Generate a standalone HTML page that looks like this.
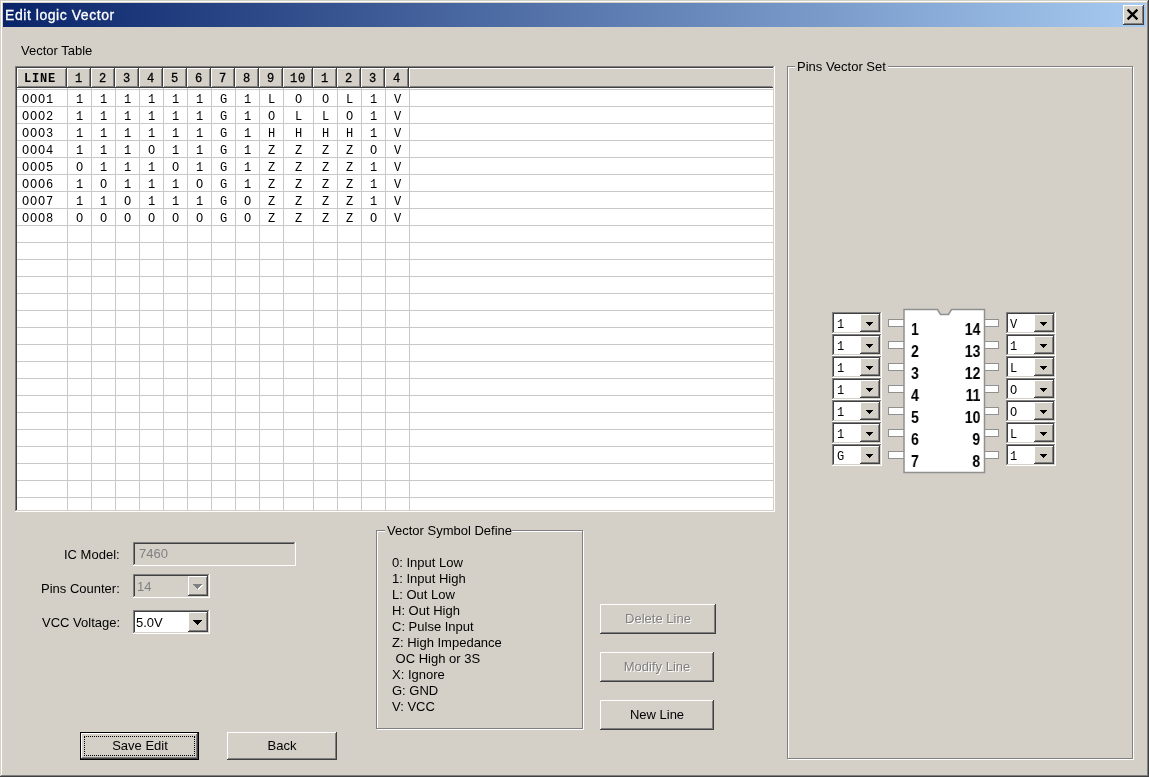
<!DOCTYPE html>
<html><head><meta charset="utf-8"><style>
html,body{margin:0;padding:0}
body{width:1149px;height:777px;background:#D4D0C8;position:relative;overflow:hidden}
body div,body svg{position:absolute}
.s,.md,.hd,.mc,.cn,.title{will-change:transform}
.s{font-family:"Liberation Sans",sans-serif;font-size:13px;line-height:20px;white-space:pre;color:#000}
.title{font-family:"Liberation Sans",sans-serif;font-size:14px;letter-spacing:0.55px;-webkit-text-stroke:0.3px #fff;line-height:20px;white-space:pre;color:#fff}
.hd{font-family:"Liberation Mono",monospace;font-weight:bold;font-size:12px;letter-spacing:0.8px;line-height:20px;white-space:pre;color:#000}
.md{font-family:"Liberation Mono",monospace;font-size:12px;letter-spacing:0.8px;line-height:20px;white-space:pre;color:#000}
.mc{font-family:"Liberation Mono",monospace;font-size:12px;line-height:20px;white-space:pre;color:#000}
.cn{font-family:"Liberation Sans",sans-serif;font-weight:bold;font-size:16.5px;transform:scaleX(0.85);line-height:20px;white-space:pre;color:#000}
</style></head><body>
<div style="left:1px;top:1px;width:1147px;height:1px;background:#FFFFFF"></div>
<div style="left:1px;top:1px;width:1px;height:775px;background:#FFFFFF"></div>
<div style="left:1px;top:775px;width:1147px;height:1px;background:#808080"></div>
<div style="left:1147px;top:1px;width:1px;height:775px;background:#808080"></div>
<div style="left:0px;top:776px;width:1149px;height:1px;background:#404040"></div>
<div style="left:1148px;top:0px;width:1px;height:777px;background:#404040"></div>
<div style="left:3px;top:3px;width:1143px;height:24px;background:linear-gradient(to right,#0A246A,#A6CAF0)"></div>
<div class="title" style="left:5px;top:5px;">Edit logic Vector</div>
<div style="left:1123px;top:5px;width:21px;height:20px;background:#D4D0C8"></div>
<div style="left:1123px;top:5px;width:21px;height:1px;background:#FFFFFF"></div>
<div style="left:1123px;top:5px;width:1px;height:20px;background:#FFFFFF"></div>
<div style="left:1123px;top:24px;width:21px;height:1px;background:#404040"></div>
<div style="left:1143px;top:5px;width:1px;height:20px;background:#404040"></div>
<div style="left:1124px;top:23px;width:19px;height:1px;background:#808080"></div>
<div style="left:1142px;top:6px;width:1px;height:18px;background:#808080"></div>
<svg style="position:absolute;left:1118px;top:0px" width="30" height="30" viewBox="0 0 30 30"><path d="M9.6 9.6L19.4 19.4M19.4 9.6L9.6 19.4" stroke="#000" stroke-width="2.3" stroke-linecap="butt" fill="none"/></svg>
<div class="s" style="left:21px;top:41px;">Vector Table</div>
<div style="left:15px;top:66px;width:760px;height:1px;background:#808080"></div>
<div style="left:15px;top:66px;width:1px;height:446px;background:#808080"></div>
<div style="left:15px;top:511px;width:760px;height:1px;background:#FFFFFF"></div>
<div style="left:774px;top:66px;width:1px;height:446px;background:#FFFFFF"></div>
<div style="left:16px;top:67px;width:758px;height:1px;background:#404040"></div>
<div style="left:16px;top:67px;width:1px;height:444px;background:#404040"></div>
<div style="left:16px;top:510px;width:758px;height:1px;background:#D4D0C8"></div>
<div style="left:773px;top:67px;width:1px;height:444px;background:#D4D0C8"></div>
<div style="left:17px;top:68px;width:756px;height:442px;background:#FFFFFF"></div>
<div style="left:17px;top:68px;width:50px;height:20px;background:#D4D0C8"></div>
<div style="left:17px;top:68px;width:50px;height:1px;background:#FFFFFF"></div>
<div style="left:17px;top:68px;width:1px;height:20px;background:#FFFFFF"></div>
<div style="left:65px;top:69px;width:1px;height:18px;background:#808080"></div>
<div style="left:66px;top:68px;width:1px;height:20px;background:#404040"></div>
<div style="left:18px;top:86px;width:48px;height:1px;background:#808080"></div>
<div style="left:17px;top:87px;width:50px;height:1px;background:#404040"></div>
<div style="left:67px;top:68px;width:24px;height:20px;background:#D4D0C8"></div>
<div style="left:67px;top:68px;width:24px;height:1px;background:#FFFFFF"></div>
<div style="left:67px;top:68px;width:1px;height:20px;background:#FFFFFF"></div>
<div style="left:89px;top:69px;width:1px;height:18px;background:#808080"></div>
<div style="left:90px;top:68px;width:1px;height:20px;background:#404040"></div>
<div style="left:68px;top:86px;width:22px;height:1px;background:#808080"></div>
<div style="left:67px;top:87px;width:24px;height:1px;background:#404040"></div>
<div style="left:91px;top:68px;width:24px;height:20px;background:#D4D0C8"></div>
<div style="left:91px;top:68px;width:24px;height:1px;background:#FFFFFF"></div>
<div style="left:91px;top:68px;width:1px;height:20px;background:#FFFFFF"></div>
<div style="left:113px;top:69px;width:1px;height:18px;background:#808080"></div>
<div style="left:114px;top:68px;width:1px;height:20px;background:#404040"></div>
<div style="left:92px;top:86px;width:22px;height:1px;background:#808080"></div>
<div style="left:91px;top:87px;width:24px;height:1px;background:#404040"></div>
<div style="left:115px;top:68px;width:24px;height:20px;background:#D4D0C8"></div>
<div style="left:115px;top:68px;width:24px;height:1px;background:#FFFFFF"></div>
<div style="left:115px;top:68px;width:1px;height:20px;background:#FFFFFF"></div>
<div style="left:137px;top:69px;width:1px;height:18px;background:#808080"></div>
<div style="left:138px;top:68px;width:1px;height:20px;background:#404040"></div>
<div style="left:116px;top:86px;width:22px;height:1px;background:#808080"></div>
<div style="left:115px;top:87px;width:24px;height:1px;background:#404040"></div>
<div style="left:139px;top:68px;width:24px;height:20px;background:#D4D0C8"></div>
<div style="left:139px;top:68px;width:24px;height:1px;background:#FFFFFF"></div>
<div style="left:139px;top:68px;width:1px;height:20px;background:#FFFFFF"></div>
<div style="left:161px;top:69px;width:1px;height:18px;background:#808080"></div>
<div style="left:162px;top:68px;width:1px;height:20px;background:#404040"></div>
<div style="left:140px;top:86px;width:22px;height:1px;background:#808080"></div>
<div style="left:139px;top:87px;width:24px;height:1px;background:#404040"></div>
<div style="left:163px;top:68px;width:24px;height:20px;background:#D4D0C8"></div>
<div style="left:163px;top:68px;width:24px;height:1px;background:#FFFFFF"></div>
<div style="left:163px;top:68px;width:1px;height:20px;background:#FFFFFF"></div>
<div style="left:185px;top:69px;width:1px;height:18px;background:#808080"></div>
<div style="left:186px;top:68px;width:1px;height:20px;background:#404040"></div>
<div style="left:164px;top:86px;width:22px;height:1px;background:#808080"></div>
<div style="left:163px;top:87px;width:24px;height:1px;background:#404040"></div>
<div style="left:187px;top:68px;width:24px;height:20px;background:#D4D0C8"></div>
<div style="left:187px;top:68px;width:24px;height:1px;background:#FFFFFF"></div>
<div style="left:187px;top:68px;width:1px;height:20px;background:#FFFFFF"></div>
<div style="left:209px;top:69px;width:1px;height:18px;background:#808080"></div>
<div style="left:210px;top:68px;width:1px;height:20px;background:#404040"></div>
<div style="left:188px;top:86px;width:22px;height:1px;background:#808080"></div>
<div style="left:187px;top:87px;width:24px;height:1px;background:#404040"></div>
<div style="left:211px;top:68px;width:24px;height:20px;background:#D4D0C8"></div>
<div style="left:211px;top:68px;width:24px;height:1px;background:#FFFFFF"></div>
<div style="left:211px;top:68px;width:1px;height:20px;background:#FFFFFF"></div>
<div style="left:233px;top:69px;width:1px;height:18px;background:#808080"></div>
<div style="left:234px;top:68px;width:1px;height:20px;background:#404040"></div>
<div style="left:212px;top:86px;width:22px;height:1px;background:#808080"></div>
<div style="left:211px;top:87px;width:24px;height:1px;background:#404040"></div>
<div style="left:235px;top:68px;width:24px;height:20px;background:#D4D0C8"></div>
<div style="left:235px;top:68px;width:24px;height:1px;background:#FFFFFF"></div>
<div style="left:235px;top:68px;width:1px;height:20px;background:#FFFFFF"></div>
<div style="left:257px;top:69px;width:1px;height:18px;background:#808080"></div>
<div style="left:258px;top:68px;width:1px;height:20px;background:#404040"></div>
<div style="left:236px;top:86px;width:22px;height:1px;background:#808080"></div>
<div style="left:235px;top:87px;width:24px;height:1px;background:#404040"></div>
<div style="left:259px;top:68px;width:24px;height:20px;background:#D4D0C8"></div>
<div style="left:259px;top:68px;width:24px;height:1px;background:#FFFFFF"></div>
<div style="left:259px;top:68px;width:1px;height:20px;background:#FFFFFF"></div>
<div style="left:281px;top:69px;width:1px;height:18px;background:#808080"></div>
<div style="left:282px;top:68px;width:1px;height:20px;background:#404040"></div>
<div style="left:260px;top:86px;width:22px;height:1px;background:#808080"></div>
<div style="left:259px;top:87px;width:24px;height:1px;background:#404040"></div>
<div style="left:283px;top:68px;width:30px;height:20px;background:#D4D0C8"></div>
<div style="left:283px;top:68px;width:30px;height:1px;background:#FFFFFF"></div>
<div style="left:283px;top:68px;width:1px;height:20px;background:#FFFFFF"></div>
<div style="left:311px;top:69px;width:1px;height:18px;background:#808080"></div>
<div style="left:312px;top:68px;width:1px;height:20px;background:#404040"></div>
<div style="left:284px;top:86px;width:28px;height:1px;background:#808080"></div>
<div style="left:283px;top:87px;width:30px;height:1px;background:#404040"></div>
<div style="left:313px;top:68px;width:24px;height:20px;background:#D4D0C8"></div>
<div style="left:313px;top:68px;width:24px;height:1px;background:#FFFFFF"></div>
<div style="left:313px;top:68px;width:1px;height:20px;background:#FFFFFF"></div>
<div style="left:335px;top:69px;width:1px;height:18px;background:#808080"></div>
<div style="left:336px;top:68px;width:1px;height:20px;background:#404040"></div>
<div style="left:314px;top:86px;width:22px;height:1px;background:#808080"></div>
<div style="left:313px;top:87px;width:24px;height:1px;background:#404040"></div>
<div style="left:337px;top:68px;width:24px;height:20px;background:#D4D0C8"></div>
<div style="left:337px;top:68px;width:24px;height:1px;background:#FFFFFF"></div>
<div style="left:337px;top:68px;width:1px;height:20px;background:#FFFFFF"></div>
<div style="left:359px;top:69px;width:1px;height:18px;background:#808080"></div>
<div style="left:360px;top:68px;width:1px;height:20px;background:#404040"></div>
<div style="left:338px;top:86px;width:22px;height:1px;background:#808080"></div>
<div style="left:337px;top:87px;width:24px;height:1px;background:#404040"></div>
<div style="left:361px;top:68px;width:24px;height:20px;background:#D4D0C8"></div>
<div style="left:361px;top:68px;width:24px;height:1px;background:#FFFFFF"></div>
<div style="left:361px;top:68px;width:1px;height:20px;background:#FFFFFF"></div>
<div style="left:383px;top:69px;width:1px;height:18px;background:#808080"></div>
<div style="left:384px;top:68px;width:1px;height:20px;background:#404040"></div>
<div style="left:362px;top:86px;width:22px;height:1px;background:#808080"></div>
<div style="left:361px;top:87px;width:24px;height:1px;background:#404040"></div>
<div style="left:385px;top:68px;width:24px;height:20px;background:#D4D0C8"></div>
<div style="left:385px;top:68px;width:24px;height:1px;background:#FFFFFF"></div>
<div style="left:385px;top:68px;width:1px;height:20px;background:#FFFFFF"></div>
<div style="left:407px;top:69px;width:1px;height:18px;background:#808080"></div>
<div style="left:408px;top:68px;width:1px;height:20px;background:#404040"></div>
<div style="left:386px;top:86px;width:22px;height:1px;background:#808080"></div>
<div style="left:385px;top:87px;width:24px;height:1px;background:#404040"></div>
<div style="left:409px;top:68px;width:364px;height:20px;background:#D4D0C8"></div>
<div style="left:409px;top:68px;width:364px;height:1px;background:#FFFFFF"></div>
<div style="left:409px;top:68px;width:1px;height:20px;background:#FFFFFF"></div>
<div style="left:410px;top:86px;width:362px;height:1px;background:#808080"></div>
<div style="left:409px;top:87px;width:364px;height:1px;background:#404040"></div>
<div style="left:17px;top:89px;width:756px;height:1px;background:#C8C8C8"></div>
<div style="left:17px;top:106px;width:756px;height:1px;background:#C8C8C8"></div>
<div style="left:17px;top:123px;width:756px;height:1px;background:#C8C8C8"></div>
<div style="left:17px;top:140px;width:756px;height:1px;background:#C8C8C8"></div>
<div style="left:17px;top:157px;width:756px;height:1px;background:#C8C8C8"></div>
<div style="left:17px;top:174px;width:756px;height:1px;background:#C8C8C8"></div>
<div style="left:17px;top:191px;width:756px;height:1px;background:#C8C8C8"></div>
<div style="left:17px;top:208px;width:756px;height:1px;background:#C8C8C8"></div>
<div style="left:17px;top:225px;width:756px;height:1px;background:#C8C8C8"></div>
<div style="left:17px;top:242px;width:756px;height:1px;background:#C8C8C8"></div>
<div style="left:17px;top:259px;width:756px;height:1px;background:#C8C8C8"></div>
<div style="left:17px;top:276px;width:756px;height:1px;background:#C8C8C8"></div>
<div style="left:17px;top:293px;width:756px;height:1px;background:#C8C8C8"></div>
<div style="left:17px;top:310px;width:756px;height:1px;background:#C8C8C8"></div>
<div style="left:17px;top:327px;width:756px;height:1px;background:#C8C8C8"></div>
<div style="left:17px;top:344px;width:756px;height:1px;background:#C8C8C8"></div>
<div style="left:17px;top:361px;width:756px;height:1px;background:#C8C8C8"></div>
<div style="left:17px;top:378px;width:756px;height:1px;background:#C8C8C8"></div>
<div style="left:17px;top:395px;width:756px;height:1px;background:#C8C8C8"></div>
<div style="left:17px;top:412px;width:756px;height:1px;background:#C8C8C8"></div>
<div style="left:17px;top:429px;width:756px;height:1px;background:#C8C8C8"></div>
<div style="left:17px;top:446px;width:756px;height:1px;background:#C8C8C8"></div>
<div style="left:17px;top:463px;width:756px;height:1px;background:#C8C8C8"></div>
<div style="left:17px;top:480px;width:756px;height:1px;background:#C8C8C8"></div>
<div style="left:17px;top:497px;width:756px;height:1px;background:#C8C8C8"></div>
<div style="left:67px;top:88px;width:1px;height:422px;background:#C8C8C8"></div>
<div style="left:91px;top:88px;width:1px;height:422px;background:#C8C8C8"></div>
<div style="left:115px;top:88px;width:1px;height:422px;background:#C8C8C8"></div>
<div style="left:139px;top:88px;width:1px;height:422px;background:#C8C8C8"></div>
<div style="left:163px;top:88px;width:1px;height:422px;background:#C8C8C8"></div>
<div style="left:187px;top:88px;width:1px;height:422px;background:#C8C8C8"></div>
<div style="left:211px;top:88px;width:1px;height:422px;background:#C8C8C8"></div>
<div style="left:235px;top:88px;width:1px;height:422px;background:#C8C8C8"></div>
<div style="left:259px;top:88px;width:1px;height:422px;background:#C8C8C8"></div>
<div style="left:283px;top:88px;width:1px;height:422px;background:#C8C8C8"></div>
<div style="left:313px;top:88px;width:1px;height:422px;background:#C8C8C8"></div>
<div style="left:337px;top:88px;width:1px;height:422px;background:#C8C8C8"></div>
<div style="left:361px;top:88px;width:1px;height:422px;background:#C8C8C8"></div>
<div style="left:385px;top:88px;width:1px;height:422px;background:#C8C8C8"></div>
<div style="left:409px;top:88px;width:1px;height:422px;background:#C8C8C8"></div>
<div class="hd" style="left:24px;top:69px;">LINE</div>
<div class="md" style="left:59.400000000000006px;width:40px;top:69px;text-align:center;-webkit-text-stroke:0.3px #000">1</div>
<div class="md" style="left:83.4px;width:40px;top:69px;text-align:center;-webkit-text-stroke:0.3px #000">2</div>
<div class="md" style="left:107.4px;width:40px;top:69px;text-align:center;-webkit-text-stroke:0.3px #000">3</div>
<div class="md" style="left:131.4px;width:40px;top:69px;text-align:center;-webkit-text-stroke:0.3px #000">4</div>
<div class="md" style="left:155.4px;width:40px;top:69px;text-align:center;-webkit-text-stroke:0.3px #000">5</div>
<div class="md" style="left:179.4px;width:40px;top:69px;text-align:center;-webkit-text-stroke:0.3px #000">6</div>
<div class="md" style="left:203.4px;width:40px;top:69px;text-align:center;-webkit-text-stroke:0.3px #000">7</div>
<div class="md" style="left:227.4px;width:40px;top:69px;text-align:center;-webkit-text-stroke:0.3px #000">8</div>
<div class="md" style="left:251.39999999999998px;width:40px;top:69px;text-align:center;-webkit-text-stroke:0.3px #000">9</div>
<div class="md" style="left:278.4px;width:40px;top:69px;text-align:center;-webkit-text-stroke:0.3px #000">10</div>
<div class="md" style="left:305.4px;width:40px;top:69px;text-align:center;-webkit-text-stroke:0.3px #000">1</div>
<div class="md" style="left:329.4px;width:40px;top:69px;text-align:center;-webkit-text-stroke:0.3px #000">2</div>
<div class="md" style="left:353.4px;width:40px;top:69px;text-align:center;-webkit-text-stroke:0.3px #000">3</div>
<div class="md" style="left:377.4px;width:40px;top:69px;text-align:center;-webkit-text-stroke:0.3px #000">4</div>
<div class="md" style="left:22px;top:90px;">OOO1</div>
<div class="md" style="left:64.5px;width:30px;top:90px;text-align:center;">1</div>
<div class="md" style="left:88.5px;width:30px;top:90px;text-align:center;">1</div>
<div class="md" style="left:112.5px;width:30px;top:90px;text-align:center;">1</div>
<div class="md" style="left:136.5px;width:30px;top:90px;text-align:center;">1</div>
<div class="md" style="left:160.5px;width:30px;top:90px;text-align:center;">1</div>
<div class="md" style="left:184.5px;width:30px;top:90px;text-align:center;">1</div>
<div class="md" style="left:208.5px;width:30px;top:90px;text-align:center;">G</div>
<div class="md" style="left:232.5px;width:30px;top:90px;text-align:center;">1</div>
<div class="md" style="left:256.5px;width:30px;top:90px;text-align:center;">L</div>
<div class="md" style="left:283.5px;width:30px;top:90px;text-align:center;">O</div>
<div class="md" style="left:310.5px;width:30px;top:90px;text-align:center;">O</div>
<div class="md" style="left:334.5px;width:30px;top:90px;text-align:center;">L</div>
<div class="md" style="left:358.5px;width:30px;top:90px;text-align:center;">1</div>
<div class="md" style="left:382.5px;width:30px;top:90px;text-align:center;">V</div>
<div class="md" style="left:22px;top:107px;">OOO2</div>
<div class="md" style="left:64.5px;width:30px;top:107px;text-align:center;">1</div>
<div class="md" style="left:88.5px;width:30px;top:107px;text-align:center;">1</div>
<div class="md" style="left:112.5px;width:30px;top:107px;text-align:center;">1</div>
<div class="md" style="left:136.5px;width:30px;top:107px;text-align:center;">1</div>
<div class="md" style="left:160.5px;width:30px;top:107px;text-align:center;">1</div>
<div class="md" style="left:184.5px;width:30px;top:107px;text-align:center;">1</div>
<div class="md" style="left:208.5px;width:30px;top:107px;text-align:center;">G</div>
<div class="md" style="left:232.5px;width:30px;top:107px;text-align:center;">1</div>
<div class="md" style="left:256.5px;width:30px;top:107px;text-align:center;">O</div>
<div class="md" style="left:283.5px;width:30px;top:107px;text-align:center;">L</div>
<div class="md" style="left:310.5px;width:30px;top:107px;text-align:center;">L</div>
<div class="md" style="left:334.5px;width:30px;top:107px;text-align:center;">O</div>
<div class="md" style="left:358.5px;width:30px;top:107px;text-align:center;">1</div>
<div class="md" style="left:382.5px;width:30px;top:107px;text-align:center;">V</div>
<div class="md" style="left:22px;top:124px;">OOO3</div>
<div class="md" style="left:64.5px;width:30px;top:124px;text-align:center;">1</div>
<div class="md" style="left:88.5px;width:30px;top:124px;text-align:center;">1</div>
<div class="md" style="left:112.5px;width:30px;top:124px;text-align:center;">1</div>
<div class="md" style="left:136.5px;width:30px;top:124px;text-align:center;">1</div>
<div class="md" style="left:160.5px;width:30px;top:124px;text-align:center;">1</div>
<div class="md" style="left:184.5px;width:30px;top:124px;text-align:center;">1</div>
<div class="md" style="left:208.5px;width:30px;top:124px;text-align:center;">G</div>
<div class="md" style="left:232.5px;width:30px;top:124px;text-align:center;">1</div>
<div class="md" style="left:256.5px;width:30px;top:124px;text-align:center;">H</div>
<div class="md" style="left:283.5px;width:30px;top:124px;text-align:center;">H</div>
<div class="md" style="left:310.5px;width:30px;top:124px;text-align:center;">H</div>
<div class="md" style="left:334.5px;width:30px;top:124px;text-align:center;">H</div>
<div class="md" style="left:358.5px;width:30px;top:124px;text-align:center;">1</div>
<div class="md" style="left:382.5px;width:30px;top:124px;text-align:center;">V</div>
<div class="md" style="left:22px;top:141px;">OOO4</div>
<div class="md" style="left:64.5px;width:30px;top:141px;text-align:center;">1</div>
<div class="md" style="left:88.5px;width:30px;top:141px;text-align:center;">1</div>
<div class="md" style="left:112.5px;width:30px;top:141px;text-align:center;">1</div>
<div class="md" style="left:136.5px;width:30px;top:141px;text-align:center;">O</div>
<div class="md" style="left:160.5px;width:30px;top:141px;text-align:center;">1</div>
<div class="md" style="left:184.5px;width:30px;top:141px;text-align:center;">1</div>
<div class="md" style="left:208.5px;width:30px;top:141px;text-align:center;">G</div>
<div class="md" style="left:232.5px;width:30px;top:141px;text-align:center;">1</div>
<div class="md" style="left:256.5px;width:30px;top:141px;text-align:center;">Z</div>
<div class="md" style="left:283.5px;width:30px;top:141px;text-align:center;">Z</div>
<div class="md" style="left:310.5px;width:30px;top:141px;text-align:center;">Z</div>
<div class="md" style="left:334.5px;width:30px;top:141px;text-align:center;">Z</div>
<div class="md" style="left:358.5px;width:30px;top:141px;text-align:center;">O</div>
<div class="md" style="left:382.5px;width:30px;top:141px;text-align:center;">V</div>
<div class="md" style="left:22px;top:158px;">OOO5</div>
<div class="md" style="left:64.5px;width:30px;top:158px;text-align:center;">O</div>
<div class="md" style="left:88.5px;width:30px;top:158px;text-align:center;">1</div>
<div class="md" style="left:112.5px;width:30px;top:158px;text-align:center;">1</div>
<div class="md" style="left:136.5px;width:30px;top:158px;text-align:center;">1</div>
<div class="md" style="left:160.5px;width:30px;top:158px;text-align:center;">O</div>
<div class="md" style="left:184.5px;width:30px;top:158px;text-align:center;">1</div>
<div class="md" style="left:208.5px;width:30px;top:158px;text-align:center;">G</div>
<div class="md" style="left:232.5px;width:30px;top:158px;text-align:center;">1</div>
<div class="md" style="left:256.5px;width:30px;top:158px;text-align:center;">Z</div>
<div class="md" style="left:283.5px;width:30px;top:158px;text-align:center;">Z</div>
<div class="md" style="left:310.5px;width:30px;top:158px;text-align:center;">Z</div>
<div class="md" style="left:334.5px;width:30px;top:158px;text-align:center;">Z</div>
<div class="md" style="left:358.5px;width:30px;top:158px;text-align:center;">1</div>
<div class="md" style="left:382.5px;width:30px;top:158px;text-align:center;">V</div>
<div class="md" style="left:22px;top:175px;">OOO6</div>
<div class="md" style="left:64.5px;width:30px;top:175px;text-align:center;">1</div>
<div class="md" style="left:88.5px;width:30px;top:175px;text-align:center;">O</div>
<div class="md" style="left:112.5px;width:30px;top:175px;text-align:center;">1</div>
<div class="md" style="left:136.5px;width:30px;top:175px;text-align:center;">1</div>
<div class="md" style="left:160.5px;width:30px;top:175px;text-align:center;">1</div>
<div class="md" style="left:184.5px;width:30px;top:175px;text-align:center;">O</div>
<div class="md" style="left:208.5px;width:30px;top:175px;text-align:center;">G</div>
<div class="md" style="left:232.5px;width:30px;top:175px;text-align:center;">1</div>
<div class="md" style="left:256.5px;width:30px;top:175px;text-align:center;">Z</div>
<div class="md" style="left:283.5px;width:30px;top:175px;text-align:center;">Z</div>
<div class="md" style="left:310.5px;width:30px;top:175px;text-align:center;">Z</div>
<div class="md" style="left:334.5px;width:30px;top:175px;text-align:center;">Z</div>
<div class="md" style="left:358.5px;width:30px;top:175px;text-align:center;">1</div>
<div class="md" style="left:382.5px;width:30px;top:175px;text-align:center;">V</div>
<div class="md" style="left:22px;top:192px;">OOO7</div>
<div class="md" style="left:64.5px;width:30px;top:192px;text-align:center;">1</div>
<div class="md" style="left:88.5px;width:30px;top:192px;text-align:center;">1</div>
<div class="md" style="left:112.5px;width:30px;top:192px;text-align:center;">O</div>
<div class="md" style="left:136.5px;width:30px;top:192px;text-align:center;">1</div>
<div class="md" style="left:160.5px;width:30px;top:192px;text-align:center;">1</div>
<div class="md" style="left:184.5px;width:30px;top:192px;text-align:center;">1</div>
<div class="md" style="left:208.5px;width:30px;top:192px;text-align:center;">G</div>
<div class="md" style="left:232.5px;width:30px;top:192px;text-align:center;">O</div>
<div class="md" style="left:256.5px;width:30px;top:192px;text-align:center;">Z</div>
<div class="md" style="left:283.5px;width:30px;top:192px;text-align:center;">Z</div>
<div class="md" style="left:310.5px;width:30px;top:192px;text-align:center;">Z</div>
<div class="md" style="left:334.5px;width:30px;top:192px;text-align:center;">Z</div>
<div class="md" style="left:358.5px;width:30px;top:192px;text-align:center;">1</div>
<div class="md" style="left:382.5px;width:30px;top:192px;text-align:center;">V</div>
<div class="md" style="left:22px;top:209px;">OOO8</div>
<div class="md" style="left:64.5px;width:30px;top:209px;text-align:center;">O</div>
<div class="md" style="left:88.5px;width:30px;top:209px;text-align:center;">O</div>
<div class="md" style="left:112.5px;width:30px;top:209px;text-align:center;">O</div>
<div class="md" style="left:136.5px;width:30px;top:209px;text-align:center;">O</div>
<div class="md" style="left:160.5px;width:30px;top:209px;text-align:center;">O</div>
<div class="md" style="left:184.5px;width:30px;top:209px;text-align:center;">O</div>
<div class="md" style="left:208.5px;width:30px;top:209px;text-align:center;">G</div>
<div class="md" style="left:232.5px;width:30px;top:209px;text-align:center;">O</div>
<div class="md" style="left:256.5px;width:30px;top:209px;text-align:center;">Z</div>
<div class="md" style="left:283.5px;width:30px;top:209px;text-align:center;">Z</div>
<div class="md" style="left:310.5px;width:30px;top:209px;text-align:center;">Z</div>
<div class="md" style="left:334.5px;width:30px;top:209px;text-align:center;">Z</div>
<div class="md" style="left:358.5px;width:30px;top:209px;text-align:center;">O</div>
<div class="md" style="left:382.5px;width:30px;top:209px;text-align:center;">V</div>
<div class="s" style="right:1029px;top:545px;text-align:right;">IC Model:</div>
<div class="s" style="right:1029px;top:579px;text-align:right;">Pins Counter:</div>
<div class="s" style="right:1029px;top:613px;text-align:right;">VCC Voltage:</div>
<div style="left:133px;top:542px;width:163px;height:1px;background:#808080"></div>
<div style="left:133px;top:542px;width:1px;height:24px;background:#808080"></div>
<div style="left:133px;top:565px;width:163px;height:1px;background:#FFFFFF"></div>
<div style="left:295px;top:542px;width:1px;height:24px;background:#FFFFFF"></div>
<div style="left:134px;top:543px;width:161px;height:1px;background:#404040"></div>
<div style="left:134px;top:543px;width:1px;height:22px;background:#404040"></div>
<div style="left:134px;top:564px;width:161px;height:1px;background:#D4D0C8"></div>
<div style="left:294px;top:543px;width:1px;height:22px;background:#D4D0C8"></div>
<div class="s" style="left:139px;top:544px;color:#808080">7460</div>
<div style="left:133px;top:574px;width:77px;height:1px;background:#808080"></div>
<div style="left:133px;top:574px;width:1px;height:24px;background:#808080"></div>
<div style="left:133px;top:597px;width:77px;height:1px;background:#FFFFFF"></div>
<div style="left:209px;top:574px;width:1px;height:24px;background:#FFFFFF"></div>
<div style="left:134px;top:575px;width:75px;height:1px;background:#404040"></div>
<div style="left:134px;top:575px;width:1px;height:22px;background:#404040"></div>
<div style="left:134px;top:596px;width:75px;height:1px;background:#D4D0C8"></div>
<div style="left:208px;top:575px;width:1px;height:22px;background:#D4D0C8"></div>
<div style="left:135px;top:576px;width:73px;height:20px;background:#D4D0C8"></div>
<div style="left:188px;top:576px;width:20px;height:20px;background:#D4D0C8"></div>
<div style="left:188px;top:576px;width:20px;height:1px;background:#FFFFFF"></div>
<div style="left:188px;top:576px;width:1px;height:20px;background:#FFFFFF"></div>
<div style="left:188px;top:595px;width:20px;height:1px;background:#404040"></div>
<div style="left:207px;top:576px;width:1px;height:20px;background:#404040"></div>
<div style="left:189px;top:594px;width:18px;height:1px;background:#808080"></div>
<div style="left:206px;top:577px;width:1px;height:18px;background:#808080"></div>
<div style="left:194px;top:585px;width:9px;height:1px;background:#FFFFFF"></div>
<div style="left:195px;top:586px;width:7px;height:1px;background:#FFFFFF"></div>
<div style="left:196px;top:587px;width:5px;height:1px;background:#FFFFFF"></div>
<div style="left:197px;top:588px;width:3px;height:1px;background:#FFFFFF"></div>
<div style="left:198px;top:589px;width:1px;height:1px;background:#FFFFFF"></div>
<div style="left:193px;top:584px;width:9px;height:1px;background:#808080"></div>
<div style="left:194px;top:585px;width:7px;height:1px;background:#808080"></div>
<div style="left:195px;top:586px;width:5px;height:1px;background:#808080"></div>
<div style="left:196px;top:587px;width:3px;height:1px;background:#808080"></div>
<div style="left:197px;top:588px;width:1px;height:1px;background:#808080"></div>
<div class="s" style="left:137px;top:577px;color:#808080">14</div>
<div style="left:133px;top:610px;width:77px;height:1px;background:#808080"></div>
<div style="left:133px;top:610px;width:1px;height:24px;background:#808080"></div>
<div style="left:133px;top:633px;width:77px;height:1px;background:#FFFFFF"></div>
<div style="left:209px;top:610px;width:1px;height:24px;background:#FFFFFF"></div>
<div style="left:134px;top:611px;width:75px;height:1px;background:#404040"></div>
<div style="left:134px;top:611px;width:1px;height:22px;background:#404040"></div>
<div style="left:134px;top:632px;width:75px;height:1px;background:#D4D0C8"></div>
<div style="left:208px;top:611px;width:1px;height:22px;background:#D4D0C8"></div>
<div style="left:135px;top:612px;width:73px;height:20px;background:#FFFFFF"></div>
<div style="left:188px;top:612px;width:20px;height:20px;background:#D4D0C8"></div>
<div style="left:188px;top:612px;width:20px;height:1px;background:#FFFFFF"></div>
<div style="left:188px;top:612px;width:1px;height:20px;background:#FFFFFF"></div>
<div style="left:188px;top:631px;width:20px;height:1px;background:#404040"></div>
<div style="left:207px;top:612px;width:1px;height:20px;background:#404040"></div>
<div style="left:189px;top:630px;width:18px;height:1px;background:#808080"></div>
<div style="left:206px;top:613px;width:1px;height:18px;background:#808080"></div>
<div style="left:193px;top:620px;width:9px;height:1px;background:#000000"></div>
<div style="left:194px;top:621px;width:7px;height:1px;background:#000000"></div>
<div style="left:195px;top:622px;width:5px;height:1px;background:#000000"></div>
<div style="left:196px;top:623px;width:3px;height:1px;background:#000000"></div>
<div style="left:197px;top:624px;width:1px;height:1px;background:#000000"></div>
<div class="s" style="left:136px;top:613px;">5.0V</div>
<div style="left:377px;top:531px;width:207px;height:1px;background:#FFFFFF"></div>
<div style="left:377px;top:531px;width:1px;height:199px;background:#FFFFFF"></div>
<div style="left:377px;top:729px;width:207px;height:1px;background:#FFFFFF"></div>
<div style="left:583px;top:531px;width:1px;height:199px;background:#FFFFFF"></div>
<div style="left:376px;top:530px;width:207px;height:1px;background:#808080"></div>
<div style="left:376px;top:530px;width:1px;height:199px;background:#808080"></div>
<div style="left:376px;top:728px;width:207px;height:1px;background:#808080"></div>
<div style="left:582px;top:530px;width:1px;height:199px;background:#808080"></div>
<div style="left:385px;top:525px;width:127px;height:12px;background:#D4D0C8"></div>
<div class="s" style="left:387px;top:521px;">Vector Symbol Define</div>
<div class="s" style="left:392px;top:553px;">0: Input Low</div>
<div class="s" style="left:392px;top:569px;">1: Input High</div>
<div class="s" style="left:392px;top:585px;">L: Out Low</div>
<div class="s" style="left:392px;top:601px;">H: Out High</div>
<div class="s" style="left:392px;top:617px;">C: Pulse Input</div>
<div class="s" style="left:392px;top:633px;">Z: High Impedance</div>
<div class="s" style="left:392px;top:649px;">&nbsp;OC High or 3S</div>
<div class="s" style="left:392px;top:665px;">X: Ignore</div>
<div class="s" style="left:392px;top:681px;">G: GND</div>
<div class="s" style="left:392px;top:697px;">V: VCC</div>
<div style="left:600px;top:604px;width:116px;height:30px;background:#D4D0C8"></div>
<div style="left:600px;top:604px;width:116px;height:1px;background:#FFFFFF"></div>
<div style="left:600px;top:604px;width:1px;height:30px;background:#FFFFFF"></div>
<div style="left:600px;top:633px;width:116px;height:1px;background:#404040"></div>
<div style="left:715px;top:604px;width:1px;height:30px;background:#404040"></div>
<div style="left:601px;top:632px;width:114px;height:1px;background:#808080"></div>
<div style="left:714px;top:605px;width:1px;height:28px;background:#808080"></div>
<div class="s" style="left:589.0px;width:140px;top:609.5px;text-align:center;color:#FFFFFF">Delete Line</div>
<div class="s" style="left:588.0px;width:140px;top:608.5px;text-align:center;color:#808080">Delete Line</div>
<div style="left:600px;top:652px;width:114px;height:30px;background:#D4D0C8"></div>
<div style="left:600px;top:652px;width:114px;height:1px;background:#FFFFFF"></div>
<div style="left:600px;top:652px;width:1px;height:30px;background:#FFFFFF"></div>
<div style="left:600px;top:681px;width:114px;height:1px;background:#404040"></div>
<div style="left:713px;top:652px;width:1px;height:30px;background:#404040"></div>
<div style="left:601px;top:680px;width:112px;height:1px;background:#808080"></div>
<div style="left:712px;top:653px;width:1px;height:28px;background:#808080"></div>
<div class="s" style="left:588.0px;width:140px;top:657.5px;text-align:center;color:#FFFFFF">Modify Line</div>
<div class="s" style="left:587.0px;width:140px;top:656.5px;text-align:center;color:#808080">Modify Line</div>
<div style="left:600px;top:700px;width:114px;height:30px;background:#D4D0C8"></div>
<div style="left:600px;top:700px;width:114px;height:1px;background:#FFFFFF"></div>
<div style="left:600px;top:700px;width:1px;height:30px;background:#FFFFFF"></div>
<div style="left:600px;top:729px;width:114px;height:1px;background:#404040"></div>
<div style="left:713px;top:700px;width:1px;height:30px;background:#404040"></div>
<div style="left:601px;top:728px;width:112px;height:1px;background:#808080"></div>
<div style="left:712px;top:701px;width:1px;height:28px;background:#808080"></div>
<div class="s" style="left:587.0px;width:140px;top:704.5px;text-align:center;">New Line</div>
<div style="left:80px;top:732px;width:119px;height:28px;background:#000000"></div>
<div style="left:81px;top:733px;width:117px;height:26px;background:#D4D0C8"></div>
<div style="left:81px;top:733px;width:117px;height:1px;background:#FFFFFF"></div>
<div style="left:81px;top:733px;width:1px;height:26px;background:#FFFFFF"></div>
<div style="left:81px;top:758px;width:117px;height:1px;background:#404040"></div>
<div style="left:197px;top:733px;width:1px;height:26px;background:#404040"></div>
<div style="left:82px;top:757px;width:115px;height:1px;background:#808080"></div>
<div style="left:196px;top:734px;width:1px;height:24px;background:#808080"></div>
<div style="left:84px;top:736px;width:111px;height:20px;box-sizing:border-box;border:1px dotted #000"></div>
<div class="s" style="left:69.5px;width:140px;top:735.5px;text-align:center;">Save Edit</div>
<div style="left:227px;top:732px;width:110px;height:28px;background:#D4D0C8"></div>
<div style="left:227px;top:732px;width:110px;height:1px;background:#FFFFFF"></div>
<div style="left:227px;top:732px;width:1px;height:28px;background:#FFFFFF"></div>
<div style="left:227px;top:759px;width:110px;height:1px;background:#404040"></div>
<div style="left:336px;top:732px;width:1px;height:28px;background:#404040"></div>
<div style="left:228px;top:758px;width:108px;height:1px;background:#808080"></div>
<div style="left:335px;top:733px;width:1px;height:26px;background:#808080"></div>
<div class="s" style="left:212.0px;width:140px;top:735.5px;text-align:center;">Back</div>
<div style="left:788px;top:67px;width:346px;height:1px;background:#FFFFFF"></div>
<div style="left:788px;top:67px;width:1px;height:693px;background:#FFFFFF"></div>
<div style="left:788px;top:759px;width:346px;height:1px;background:#FFFFFF"></div>
<div style="left:1133px;top:67px;width:1px;height:693px;background:#FFFFFF"></div>
<div style="left:787px;top:66px;width:346px;height:1px;background:#808080"></div>
<div style="left:787px;top:66px;width:1px;height:693px;background:#808080"></div>
<div style="left:787px;top:758px;width:346px;height:1px;background:#808080"></div>
<div style="left:1132px;top:66px;width:1px;height:693px;background:#808080"></div>
<div style="left:795px;top:60px;width:93px;height:13px;background:#D4D0C8"></div>
<div class="s" style="left:797px;top:57px;">Pins Vector Set</div>
<div style="left:832px;top:312px;width:50px;height:1px;background:#808080"></div>
<div style="left:832px;top:312px;width:1px;height:22px;background:#808080"></div>
<div style="left:832px;top:333px;width:50px;height:1px;background:#FFFFFF"></div>
<div style="left:881px;top:312px;width:1px;height:22px;background:#FFFFFF"></div>
<div style="left:833px;top:313px;width:48px;height:1px;background:#404040"></div>
<div style="left:833px;top:313px;width:1px;height:20px;background:#404040"></div>
<div style="left:833px;top:332px;width:48px;height:1px;background:#D4D0C8"></div>
<div style="left:880px;top:313px;width:1px;height:20px;background:#D4D0C8"></div>
<div style="left:834px;top:314px;width:46px;height:18px;background:#FFFFFF"></div>
<div style="left:860px;top:314px;width:20px;height:18px;background:#D4D0C8"></div>
<div style="left:860px;top:314px;width:20px;height:1px;background:#FFFFFF"></div>
<div style="left:860px;top:314px;width:1px;height:18px;background:#FFFFFF"></div>
<div style="left:860px;top:331px;width:20px;height:1px;background:#404040"></div>
<div style="left:879px;top:314px;width:1px;height:18px;background:#404040"></div>
<div style="left:861px;top:330px;width:18px;height:1px;background:#808080"></div>
<div style="left:878px;top:315px;width:1px;height:16px;background:#808080"></div>
<div style="left:866px;top:322px;width:7px;height:1px;background:#000000"></div>
<div style="left:867px;top:323px;width:5px;height:1px;background:#000000"></div>
<div style="left:868px;top:324px;width:3px;height:1px;background:#000000"></div>
<div style="left:869px;top:325px;width:1px;height:1px;background:#000000"></div>
<div class="mc" style="left:837px;top:315px;">1</div>
<div style="left:1006px;top:312px;width:50px;height:1px;background:#808080"></div>
<div style="left:1006px;top:312px;width:1px;height:22px;background:#808080"></div>
<div style="left:1006px;top:333px;width:50px;height:1px;background:#FFFFFF"></div>
<div style="left:1055px;top:312px;width:1px;height:22px;background:#FFFFFF"></div>
<div style="left:1007px;top:313px;width:48px;height:1px;background:#404040"></div>
<div style="left:1007px;top:313px;width:1px;height:20px;background:#404040"></div>
<div style="left:1007px;top:332px;width:48px;height:1px;background:#D4D0C8"></div>
<div style="left:1054px;top:313px;width:1px;height:20px;background:#D4D0C8"></div>
<div style="left:1008px;top:314px;width:46px;height:18px;background:#FFFFFF"></div>
<div style="left:1034px;top:314px;width:20px;height:18px;background:#D4D0C8"></div>
<div style="left:1034px;top:314px;width:20px;height:1px;background:#FFFFFF"></div>
<div style="left:1034px;top:314px;width:1px;height:18px;background:#FFFFFF"></div>
<div style="left:1034px;top:331px;width:20px;height:1px;background:#404040"></div>
<div style="left:1053px;top:314px;width:1px;height:18px;background:#404040"></div>
<div style="left:1035px;top:330px;width:18px;height:1px;background:#808080"></div>
<div style="left:1052px;top:315px;width:1px;height:16px;background:#808080"></div>
<div style="left:1040px;top:322px;width:7px;height:1px;background:#000000"></div>
<div style="left:1041px;top:323px;width:5px;height:1px;background:#000000"></div>
<div style="left:1042px;top:324px;width:3px;height:1px;background:#000000"></div>
<div style="left:1043px;top:325px;width:1px;height:1px;background:#000000"></div>
<div class="mc" style="left:1010px;top:315px;">V</div>
<div style="left:888px;top:319px;width:16px;height:8px;box-sizing:border-box;border:1px solid #909090;border-right:none;background:#fff"></div>
<div style="left:983px;top:319px;width:16px;height:8px;box-sizing:border-box;border:1px solid #909090;border-left:none;background:#fff"></div>
<div style="left:832px;top:334px;width:50px;height:1px;background:#808080"></div>
<div style="left:832px;top:334px;width:1px;height:22px;background:#808080"></div>
<div style="left:832px;top:355px;width:50px;height:1px;background:#FFFFFF"></div>
<div style="left:881px;top:334px;width:1px;height:22px;background:#FFFFFF"></div>
<div style="left:833px;top:335px;width:48px;height:1px;background:#404040"></div>
<div style="left:833px;top:335px;width:1px;height:20px;background:#404040"></div>
<div style="left:833px;top:354px;width:48px;height:1px;background:#D4D0C8"></div>
<div style="left:880px;top:335px;width:1px;height:20px;background:#D4D0C8"></div>
<div style="left:834px;top:336px;width:46px;height:18px;background:#FFFFFF"></div>
<div style="left:860px;top:336px;width:20px;height:18px;background:#D4D0C8"></div>
<div style="left:860px;top:336px;width:20px;height:1px;background:#FFFFFF"></div>
<div style="left:860px;top:336px;width:1px;height:18px;background:#FFFFFF"></div>
<div style="left:860px;top:353px;width:20px;height:1px;background:#404040"></div>
<div style="left:879px;top:336px;width:1px;height:18px;background:#404040"></div>
<div style="left:861px;top:352px;width:18px;height:1px;background:#808080"></div>
<div style="left:878px;top:337px;width:1px;height:16px;background:#808080"></div>
<div style="left:866px;top:344px;width:7px;height:1px;background:#000000"></div>
<div style="left:867px;top:345px;width:5px;height:1px;background:#000000"></div>
<div style="left:868px;top:346px;width:3px;height:1px;background:#000000"></div>
<div style="left:869px;top:347px;width:1px;height:1px;background:#000000"></div>
<div class="mc" style="left:837px;top:337px;">1</div>
<div style="left:1006px;top:334px;width:50px;height:1px;background:#808080"></div>
<div style="left:1006px;top:334px;width:1px;height:22px;background:#808080"></div>
<div style="left:1006px;top:355px;width:50px;height:1px;background:#FFFFFF"></div>
<div style="left:1055px;top:334px;width:1px;height:22px;background:#FFFFFF"></div>
<div style="left:1007px;top:335px;width:48px;height:1px;background:#404040"></div>
<div style="left:1007px;top:335px;width:1px;height:20px;background:#404040"></div>
<div style="left:1007px;top:354px;width:48px;height:1px;background:#D4D0C8"></div>
<div style="left:1054px;top:335px;width:1px;height:20px;background:#D4D0C8"></div>
<div style="left:1008px;top:336px;width:46px;height:18px;background:#FFFFFF"></div>
<div style="left:1034px;top:336px;width:20px;height:18px;background:#D4D0C8"></div>
<div style="left:1034px;top:336px;width:20px;height:1px;background:#FFFFFF"></div>
<div style="left:1034px;top:336px;width:1px;height:18px;background:#FFFFFF"></div>
<div style="left:1034px;top:353px;width:20px;height:1px;background:#404040"></div>
<div style="left:1053px;top:336px;width:1px;height:18px;background:#404040"></div>
<div style="left:1035px;top:352px;width:18px;height:1px;background:#808080"></div>
<div style="left:1052px;top:337px;width:1px;height:16px;background:#808080"></div>
<div style="left:1040px;top:344px;width:7px;height:1px;background:#000000"></div>
<div style="left:1041px;top:345px;width:5px;height:1px;background:#000000"></div>
<div style="left:1042px;top:346px;width:3px;height:1px;background:#000000"></div>
<div style="left:1043px;top:347px;width:1px;height:1px;background:#000000"></div>
<div class="mc" style="left:1010px;top:337px;">1</div>
<div style="left:888px;top:341px;width:16px;height:8px;box-sizing:border-box;border:1px solid #909090;border-right:none;background:#fff"></div>
<div style="left:983px;top:341px;width:16px;height:8px;box-sizing:border-box;border:1px solid #909090;border-left:none;background:#fff"></div>
<div style="left:832px;top:356px;width:50px;height:1px;background:#808080"></div>
<div style="left:832px;top:356px;width:1px;height:22px;background:#808080"></div>
<div style="left:832px;top:377px;width:50px;height:1px;background:#FFFFFF"></div>
<div style="left:881px;top:356px;width:1px;height:22px;background:#FFFFFF"></div>
<div style="left:833px;top:357px;width:48px;height:1px;background:#404040"></div>
<div style="left:833px;top:357px;width:1px;height:20px;background:#404040"></div>
<div style="left:833px;top:376px;width:48px;height:1px;background:#D4D0C8"></div>
<div style="left:880px;top:357px;width:1px;height:20px;background:#D4D0C8"></div>
<div style="left:834px;top:358px;width:46px;height:18px;background:#FFFFFF"></div>
<div style="left:860px;top:358px;width:20px;height:18px;background:#D4D0C8"></div>
<div style="left:860px;top:358px;width:20px;height:1px;background:#FFFFFF"></div>
<div style="left:860px;top:358px;width:1px;height:18px;background:#FFFFFF"></div>
<div style="left:860px;top:375px;width:20px;height:1px;background:#404040"></div>
<div style="left:879px;top:358px;width:1px;height:18px;background:#404040"></div>
<div style="left:861px;top:374px;width:18px;height:1px;background:#808080"></div>
<div style="left:878px;top:359px;width:1px;height:16px;background:#808080"></div>
<div style="left:866px;top:366px;width:7px;height:1px;background:#000000"></div>
<div style="left:867px;top:367px;width:5px;height:1px;background:#000000"></div>
<div style="left:868px;top:368px;width:3px;height:1px;background:#000000"></div>
<div style="left:869px;top:369px;width:1px;height:1px;background:#000000"></div>
<div class="mc" style="left:837px;top:359px;">1</div>
<div style="left:1006px;top:356px;width:50px;height:1px;background:#808080"></div>
<div style="left:1006px;top:356px;width:1px;height:22px;background:#808080"></div>
<div style="left:1006px;top:377px;width:50px;height:1px;background:#FFFFFF"></div>
<div style="left:1055px;top:356px;width:1px;height:22px;background:#FFFFFF"></div>
<div style="left:1007px;top:357px;width:48px;height:1px;background:#404040"></div>
<div style="left:1007px;top:357px;width:1px;height:20px;background:#404040"></div>
<div style="left:1007px;top:376px;width:48px;height:1px;background:#D4D0C8"></div>
<div style="left:1054px;top:357px;width:1px;height:20px;background:#D4D0C8"></div>
<div style="left:1008px;top:358px;width:46px;height:18px;background:#FFFFFF"></div>
<div style="left:1034px;top:358px;width:20px;height:18px;background:#D4D0C8"></div>
<div style="left:1034px;top:358px;width:20px;height:1px;background:#FFFFFF"></div>
<div style="left:1034px;top:358px;width:1px;height:18px;background:#FFFFFF"></div>
<div style="left:1034px;top:375px;width:20px;height:1px;background:#404040"></div>
<div style="left:1053px;top:358px;width:1px;height:18px;background:#404040"></div>
<div style="left:1035px;top:374px;width:18px;height:1px;background:#808080"></div>
<div style="left:1052px;top:359px;width:1px;height:16px;background:#808080"></div>
<div style="left:1040px;top:366px;width:7px;height:1px;background:#000000"></div>
<div style="left:1041px;top:367px;width:5px;height:1px;background:#000000"></div>
<div style="left:1042px;top:368px;width:3px;height:1px;background:#000000"></div>
<div style="left:1043px;top:369px;width:1px;height:1px;background:#000000"></div>
<div class="mc" style="left:1010px;top:359px;">L</div>
<div style="left:888px;top:363px;width:16px;height:8px;box-sizing:border-box;border:1px solid #909090;border-right:none;background:#fff"></div>
<div style="left:983px;top:363px;width:16px;height:8px;box-sizing:border-box;border:1px solid #909090;border-left:none;background:#fff"></div>
<div style="left:832px;top:378px;width:50px;height:1px;background:#808080"></div>
<div style="left:832px;top:378px;width:1px;height:22px;background:#808080"></div>
<div style="left:832px;top:399px;width:50px;height:1px;background:#FFFFFF"></div>
<div style="left:881px;top:378px;width:1px;height:22px;background:#FFFFFF"></div>
<div style="left:833px;top:379px;width:48px;height:1px;background:#404040"></div>
<div style="left:833px;top:379px;width:1px;height:20px;background:#404040"></div>
<div style="left:833px;top:398px;width:48px;height:1px;background:#D4D0C8"></div>
<div style="left:880px;top:379px;width:1px;height:20px;background:#D4D0C8"></div>
<div style="left:834px;top:380px;width:46px;height:18px;background:#FFFFFF"></div>
<div style="left:860px;top:380px;width:20px;height:18px;background:#D4D0C8"></div>
<div style="left:860px;top:380px;width:20px;height:1px;background:#FFFFFF"></div>
<div style="left:860px;top:380px;width:1px;height:18px;background:#FFFFFF"></div>
<div style="left:860px;top:397px;width:20px;height:1px;background:#404040"></div>
<div style="left:879px;top:380px;width:1px;height:18px;background:#404040"></div>
<div style="left:861px;top:396px;width:18px;height:1px;background:#808080"></div>
<div style="left:878px;top:381px;width:1px;height:16px;background:#808080"></div>
<div style="left:866px;top:388px;width:7px;height:1px;background:#000000"></div>
<div style="left:867px;top:389px;width:5px;height:1px;background:#000000"></div>
<div style="left:868px;top:390px;width:3px;height:1px;background:#000000"></div>
<div style="left:869px;top:391px;width:1px;height:1px;background:#000000"></div>
<div class="mc" style="left:837px;top:381px;">1</div>
<div style="left:1006px;top:378px;width:50px;height:1px;background:#808080"></div>
<div style="left:1006px;top:378px;width:1px;height:22px;background:#808080"></div>
<div style="left:1006px;top:399px;width:50px;height:1px;background:#FFFFFF"></div>
<div style="left:1055px;top:378px;width:1px;height:22px;background:#FFFFFF"></div>
<div style="left:1007px;top:379px;width:48px;height:1px;background:#404040"></div>
<div style="left:1007px;top:379px;width:1px;height:20px;background:#404040"></div>
<div style="left:1007px;top:398px;width:48px;height:1px;background:#D4D0C8"></div>
<div style="left:1054px;top:379px;width:1px;height:20px;background:#D4D0C8"></div>
<div style="left:1008px;top:380px;width:46px;height:18px;background:#FFFFFF"></div>
<div style="left:1034px;top:380px;width:20px;height:18px;background:#D4D0C8"></div>
<div style="left:1034px;top:380px;width:20px;height:1px;background:#FFFFFF"></div>
<div style="left:1034px;top:380px;width:1px;height:18px;background:#FFFFFF"></div>
<div style="left:1034px;top:397px;width:20px;height:1px;background:#404040"></div>
<div style="left:1053px;top:380px;width:1px;height:18px;background:#404040"></div>
<div style="left:1035px;top:396px;width:18px;height:1px;background:#808080"></div>
<div style="left:1052px;top:381px;width:1px;height:16px;background:#808080"></div>
<div style="left:1040px;top:388px;width:7px;height:1px;background:#000000"></div>
<div style="left:1041px;top:389px;width:5px;height:1px;background:#000000"></div>
<div style="left:1042px;top:390px;width:3px;height:1px;background:#000000"></div>
<div style="left:1043px;top:391px;width:1px;height:1px;background:#000000"></div>
<div class="mc" style="left:1010px;top:381px;">O</div>
<div style="left:888px;top:385px;width:16px;height:8px;box-sizing:border-box;border:1px solid #909090;border-right:none;background:#fff"></div>
<div style="left:983px;top:385px;width:16px;height:8px;box-sizing:border-box;border:1px solid #909090;border-left:none;background:#fff"></div>
<div style="left:832px;top:400px;width:50px;height:1px;background:#808080"></div>
<div style="left:832px;top:400px;width:1px;height:22px;background:#808080"></div>
<div style="left:832px;top:421px;width:50px;height:1px;background:#FFFFFF"></div>
<div style="left:881px;top:400px;width:1px;height:22px;background:#FFFFFF"></div>
<div style="left:833px;top:401px;width:48px;height:1px;background:#404040"></div>
<div style="left:833px;top:401px;width:1px;height:20px;background:#404040"></div>
<div style="left:833px;top:420px;width:48px;height:1px;background:#D4D0C8"></div>
<div style="left:880px;top:401px;width:1px;height:20px;background:#D4D0C8"></div>
<div style="left:834px;top:402px;width:46px;height:18px;background:#FFFFFF"></div>
<div style="left:860px;top:402px;width:20px;height:18px;background:#D4D0C8"></div>
<div style="left:860px;top:402px;width:20px;height:1px;background:#FFFFFF"></div>
<div style="left:860px;top:402px;width:1px;height:18px;background:#FFFFFF"></div>
<div style="left:860px;top:419px;width:20px;height:1px;background:#404040"></div>
<div style="left:879px;top:402px;width:1px;height:18px;background:#404040"></div>
<div style="left:861px;top:418px;width:18px;height:1px;background:#808080"></div>
<div style="left:878px;top:403px;width:1px;height:16px;background:#808080"></div>
<div style="left:866px;top:410px;width:7px;height:1px;background:#000000"></div>
<div style="left:867px;top:411px;width:5px;height:1px;background:#000000"></div>
<div style="left:868px;top:412px;width:3px;height:1px;background:#000000"></div>
<div style="left:869px;top:413px;width:1px;height:1px;background:#000000"></div>
<div class="mc" style="left:837px;top:403px;">1</div>
<div style="left:1006px;top:400px;width:50px;height:1px;background:#808080"></div>
<div style="left:1006px;top:400px;width:1px;height:22px;background:#808080"></div>
<div style="left:1006px;top:421px;width:50px;height:1px;background:#FFFFFF"></div>
<div style="left:1055px;top:400px;width:1px;height:22px;background:#FFFFFF"></div>
<div style="left:1007px;top:401px;width:48px;height:1px;background:#404040"></div>
<div style="left:1007px;top:401px;width:1px;height:20px;background:#404040"></div>
<div style="left:1007px;top:420px;width:48px;height:1px;background:#D4D0C8"></div>
<div style="left:1054px;top:401px;width:1px;height:20px;background:#D4D0C8"></div>
<div style="left:1008px;top:402px;width:46px;height:18px;background:#FFFFFF"></div>
<div style="left:1034px;top:402px;width:20px;height:18px;background:#D4D0C8"></div>
<div style="left:1034px;top:402px;width:20px;height:1px;background:#FFFFFF"></div>
<div style="left:1034px;top:402px;width:1px;height:18px;background:#FFFFFF"></div>
<div style="left:1034px;top:419px;width:20px;height:1px;background:#404040"></div>
<div style="left:1053px;top:402px;width:1px;height:18px;background:#404040"></div>
<div style="left:1035px;top:418px;width:18px;height:1px;background:#808080"></div>
<div style="left:1052px;top:403px;width:1px;height:16px;background:#808080"></div>
<div style="left:1040px;top:410px;width:7px;height:1px;background:#000000"></div>
<div style="left:1041px;top:411px;width:5px;height:1px;background:#000000"></div>
<div style="left:1042px;top:412px;width:3px;height:1px;background:#000000"></div>
<div style="left:1043px;top:413px;width:1px;height:1px;background:#000000"></div>
<div class="mc" style="left:1010px;top:403px;">O</div>
<div style="left:888px;top:407px;width:16px;height:8px;box-sizing:border-box;border:1px solid #909090;border-right:none;background:#fff"></div>
<div style="left:983px;top:407px;width:16px;height:8px;box-sizing:border-box;border:1px solid #909090;border-left:none;background:#fff"></div>
<div style="left:832px;top:422px;width:50px;height:1px;background:#808080"></div>
<div style="left:832px;top:422px;width:1px;height:22px;background:#808080"></div>
<div style="left:832px;top:443px;width:50px;height:1px;background:#FFFFFF"></div>
<div style="left:881px;top:422px;width:1px;height:22px;background:#FFFFFF"></div>
<div style="left:833px;top:423px;width:48px;height:1px;background:#404040"></div>
<div style="left:833px;top:423px;width:1px;height:20px;background:#404040"></div>
<div style="left:833px;top:442px;width:48px;height:1px;background:#D4D0C8"></div>
<div style="left:880px;top:423px;width:1px;height:20px;background:#D4D0C8"></div>
<div style="left:834px;top:424px;width:46px;height:18px;background:#FFFFFF"></div>
<div style="left:860px;top:424px;width:20px;height:18px;background:#D4D0C8"></div>
<div style="left:860px;top:424px;width:20px;height:1px;background:#FFFFFF"></div>
<div style="left:860px;top:424px;width:1px;height:18px;background:#FFFFFF"></div>
<div style="left:860px;top:441px;width:20px;height:1px;background:#404040"></div>
<div style="left:879px;top:424px;width:1px;height:18px;background:#404040"></div>
<div style="left:861px;top:440px;width:18px;height:1px;background:#808080"></div>
<div style="left:878px;top:425px;width:1px;height:16px;background:#808080"></div>
<div style="left:866px;top:432px;width:7px;height:1px;background:#000000"></div>
<div style="left:867px;top:433px;width:5px;height:1px;background:#000000"></div>
<div style="left:868px;top:434px;width:3px;height:1px;background:#000000"></div>
<div style="left:869px;top:435px;width:1px;height:1px;background:#000000"></div>
<div class="mc" style="left:837px;top:425px;">1</div>
<div style="left:1006px;top:422px;width:50px;height:1px;background:#808080"></div>
<div style="left:1006px;top:422px;width:1px;height:22px;background:#808080"></div>
<div style="left:1006px;top:443px;width:50px;height:1px;background:#FFFFFF"></div>
<div style="left:1055px;top:422px;width:1px;height:22px;background:#FFFFFF"></div>
<div style="left:1007px;top:423px;width:48px;height:1px;background:#404040"></div>
<div style="left:1007px;top:423px;width:1px;height:20px;background:#404040"></div>
<div style="left:1007px;top:442px;width:48px;height:1px;background:#D4D0C8"></div>
<div style="left:1054px;top:423px;width:1px;height:20px;background:#D4D0C8"></div>
<div style="left:1008px;top:424px;width:46px;height:18px;background:#FFFFFF"></div>
<div style="left:1034px;top:424px;width:20px;height:18px;background:#D4D0C8"></div>
<div style="left:1034px;top:424px;width:20px;height:1px;background:#FFFFFF"></div>
<div style="left:1034px;top:424px;width:1px;height:18px;background:#FFFFFF"></div>
<div style="left:1034px;top:441px;width:20px;height:1px;background:#404040"></div>
<div style="left:1053px;top:424px;width:1px;height:18px;background:#404040"></div>
<div style="left:1035px;top:440px;width:18px;height:1px;background:#808080"></div>
<div style="left:1052px;top:425px;width:1px;height:16px;background:#808080"></div>
<div style="left:1040px;top:432px;width:7px;height:1px;background:#000000"></div>
<div style="left:1041px;top:433px;width:5px;height:1px;background:#000000"></div>
<div style="left:1042px;top:434px;width:3px;height:1px;background:#000000"></div>
<div style="left:1043px;top:435px;width:1px;height:1px;background:#000000"></div>
<div class="mc" style="left:1010px;top:425px;">L</div>
<div style="left:888px;top:429px;width:16px;height:8px;box-sizing:border-box;border:1px solid #909090;border-right:none;background:#fff"></div>
<div style="left:983px;top:429px;width:16px;height:8px;box-sizing:border-box;border:1px solid #909090;border-left:none;background:#fff"></div>
<div style="left:832px;top:444px;width:50px;height:1px;background:#808080"></div>
<div style="left:832px;top:444px;width:1px;height:22px;background:#808080"></div>
<div style="left:832px;top:465px;width:50px;height:1px;background:#FFFFFF"></div>
<div style="left:881px;top:444px;width:1px;height:22px;background:#FFFFFF"></div>
<div style="left:833px;top:445px;width:48px;height:1px;background:#404040"></div>
<div style="left:833px;top:445px;width:1px;height:20px;background:#404040"></div>
<div style="left:833px;top:464px;width:48px;height:1px;background:#D4D0C8"></div>
<div style="left:880px;top:445px;width:1px;height:20px;background:#D4D0C8"></div>
<div style="left:834px;top:446px;width:46px;height:18px;background:#FFFFFF"></div>
<div style="left:860px;top:446px;width:20px;height:18px;background:#D4D0C8"></div>
<div style="left:860px;top:446px;width:20px;height:1px;background:#FFFFFF"></div>
<div style="left:860px;top:446px;width:1px;height:18px;background:#FFFFFF"></div>
<div style="left:860px;top:463px;width:20px;height:1px;background:#404040"></div>
<div style="left:879px;top:446px;width:1px;height:18px;background:#404040"></div>
<div style="left:861px;top:462px;width:18px;height:1px;background:#808080"></div>
<div style="left:878px;top:447px;width:1px;height:16px;background:#808080"></div>
<div style="left:866px;top:454px;width:7px;height:1px;background:#000000"></div>
<div style="left:867px;top:455px;width:5px;height:1px;background:#000000"></div>
<div style="left:868px;top:456px;width:3px;height:1px;background:#000000"></div>
<div style="left:869px;top:457px;width:1px;height:1px;background:#000000"></div>
<div class="mc" style="left:837px;top:447px;">G</div>
<div style="left:1006px;top:444px;width:50px;height:1px;background:#808080"></div>
<div style="left:1006px;top:444px;width:1px;height:22px;background:#808080"></div>
<div style="left:1006px;top:465px;width:50px;height:1px;background:#FFFFFF"></div>
<div style="left:1055px;top:444px;width:1px;height:22px;background:#FFFFFF"></div>
<div style="left:1007px;top:445px;width:48px;height:1px;background:#404040"></div>
<div style="left:1007px;top:445px;width:1px;height:20px;background:#404040"></div>
<div style="left:1007px;top:464px;width:48px;height:1px;background:#D4D0C8"></div>
<div style="left:1054px;top:445px;width:1px;height:20px;background:#D4D0C8"></div>
<div style="left:1008px;top:446px;width:46px;height:18px;background:#FFFFFF"></div>
<div style="left:1034px;top:446px;width:20px;height:18px;background:#D4D0C8"></div>
<div style="left:1034px;top:446px;width:20px;height:1px;background:#FFFFFF"></div>
<div style="left:1034px;top:446px;width:1px;height:18px;background:#FFFFFF"></div>
<div style="left:1034px;top:463px;width:20px;height:1px;background:#404040"></div>
<div style="left:1053px;top:446px;width:1px;height:18px;background:#404040"></div>
<div style="left:1035px;top:462px;width:18px;height:1px;background:#808080"></div>
<div style="left:1052px;top:447px;width:1px;height:16px;background:#808080"></div>
<div style="left:1040px;top:454px;width:7px;height:1px;background:#000000"></div>
<div style="left:1041px;top:455px;width:5px;height:1px;background:#000000"></div>
<div style="left:1042px;top:456px;width:3px;height:1px;background:#000000"></div>
<div style="left:1043px;top:457px;width:1px;height:1px;background:#000000"></div>
<div class="mc" style="left:1010px;top:447px;">1</div>
<div style="left:888px;top:451px;width:16px;height:8px;box-sizing:border-box;border:1px solid #909090;border-right:none;background:#fff"></div>
<div style="left:983px;top:451px;width:16px;height:8px;box-sizing:border-box;border:1px solid #909090;border-left:none;background:#fff"></div>
<svg style="position:absolute;left:900px;top:305px" width="90" height="172" viewBox="0 0 90 172"><path d="M4 167.5V4.5H37.5L40.5 9.5H48.5L51.5 4.5H84.5V167.5Z" fill="#fff" stroke="#909090" stroke-width="1.5"/></svg>
<div class="cn" style="left:911px;top:319px;transform-origin:left center">1</div>
<div class="cn" style="right:169px;top:319px;text-align:right;transform-origin:right center">14</div>
<div class="cn" style="left:911px;top:341px;transform-origin:left center">2</div>
<div class="cn" style="right:169px;top:341px;text-align:right;transform-origin:right center">13</div>
<div class="cn" style="left:911px;top:363px;transform-origin:left center">3</div>
<div class="cn" style="right:169px;top:363px;text-align:right;transform-origin:right center">12</div>
<div class="cn" style="left:911px;top:385px;transform-origin:left center">4</div>
<div class="cn" style="right:169px;top:385px;text-align:right;transform-origin:right center">11</div>
<div class="cn" style="left:911px;top:407px;transform-origin:left center">5</div>
<div class="cn" style="right:169px;top:407px;text-align:right;transform-origin:right center">10</div>
<div class="cn" style="left:911px;top:429px;transform-origin:left center">6</div>
<div class="cn" style="right:169px;top:429px;text-align:right;transform-origin:right center">9</div>
<div class="cn" style="left:911px;top:451px;transform-origin:left center">7</div>
<div class="cn" style="right:169px;top:451px;text-align:right;transform-origin:right center">8</div>
</body></html>
